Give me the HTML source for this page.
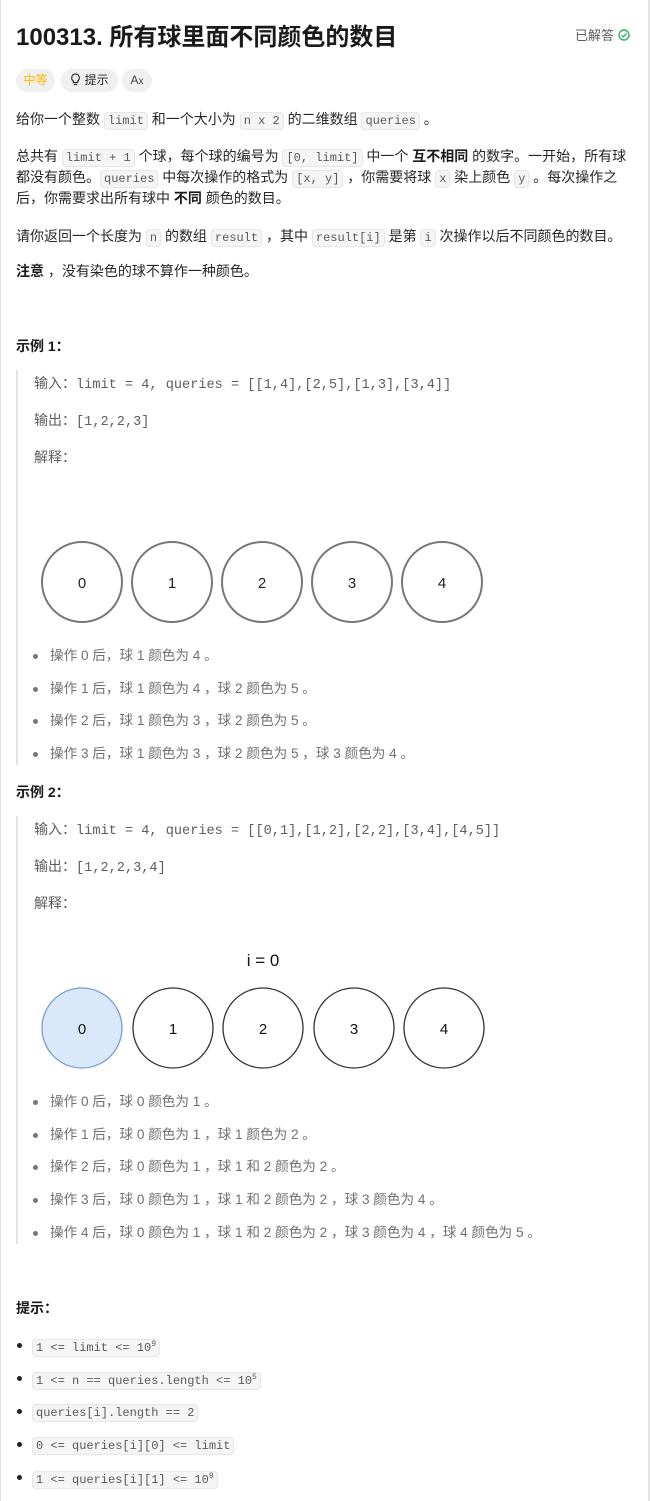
<!DOCTYPE html>
<html><head><meta charset="utf-8"><style>
*{margin:0;padding:0;box-sizing:border-box}
body{width:650px;height:1501px;background:#fff;position:relative;overflow:hidden;font-family:"Liberation Sans","Noto Sans CJK SC",sans-serif;font-size:14px;color:#262626}
.frame{position:absolute;left:0;top:0;width:650px;height:1501px;border-left:1px solid #e3e3e3;border-right:2px solid #e3e3e3}
.l{position:absolute;left:16px;line-height:20px;height:20px;white-space:nowrap}
code{font-family:"Liberation Mono",monospace;font-size:12px;background:#f5f5f6;border:1px solid #e6e6e6;border-radius:4px;padding:1px 3px;color:#5a5a5a}
b{font-weight:bold;color:#1a1a1a}
.q{left:34px;color:#5e5e5e}
.q span{font-family:"Liberation Mono",monospace;font-size:13.6px}
.bq{position:absolute;left:16px;width:2px;background:#e3e3e3}
.li{position:absolute;left:50px;line-height:20px;color:#707070;white-space:nowrap;font-size:13.6px}
.li:before{content:"";position:absolute;left:-17px;top:8px;width:5px;height:5px;border-radius:50%;background:#777}
.pl{position:absolute;left:32px;line-height:20px;white-space:nowrap}
.pl:before{content:"";position:absolute;left:-15px;top:8px;width:5px;height:5px;border-radius:50%;background:#222}
.tag{position:absolute;top:69px;height:23px;border-radius:12px;background:#f0f0f0;font-size:12px;line-height:23px;text-align:center}
sup{font-size:8px;vertical-align:5px}
</style></head><body>
<div class="frame"></div>
<div style="position:absolute;left:16px;top:22px;font-size:24px;font-weight:bold;color:#1a1a1a;line-height:32px">100313. 所有球里面不同颜色的数目</div>
<div style="position:absolute;left:575px;top:27px;font-size:13px;color:#5e5e5e;line-height:18px">已解答 <svg width="12" height="12" viewBox="0 0 12 12" style="vertical-align:-1px"><circle cx="6" cy="6" r="5" fill="none" stroke="#2db55d" stroke-width="1.4"/><path d="M3.6 6.1 L5.4 7.8 L8.4 4.5" fill="none" stroke="#2db55d" stroke-width="1.4"/></svg></div>
<div class="tag" style="left:16px;width:39px;color:#ffb800">中等</div>
<div class="tag" style="left:61px;width:57px;color:#262626"><svg width="11" height="13" viewBox="0 0 11 13" style="vertical-align:-2px"><path d="M5.5 1a3.8 3.8 0 0 0-2.2 6.9v1.6h4.4V7.9A3.8 3.8 0 0 0 5.5 1z M3.8 11.5h3.4" fill="none" stroke="#333" stroke-width="1.2"/></svg> 提示</div>
<div class="tag" style="left:122px;width:30px;color:#444">A<span style="font-size:10px">x</span></div>

<div class="l" style="top:109px">给你一个整数 <code>limit</code> 和一个大小为 <code>n x 2</code> 的二维数组 <code>queries</code> 。</div>
<div class="l" style="top:146px">总共有 <code>limit + 1</code> 个球，每个球的编号为 <code>[0, limit]</code> 中一个 <b>互不相同</b> 的数字。一开始，所有球</div>
<div class="l" style="top:167px">都没有颜色。<code>queries</code> 中每次操作的格式为 <code>[x, y]</code> ，你需要将球 <code>x</code> 染上颜色 <code>y</code> 。每次操作之</div>
<div class="l" style="top:188px">后，你需要求出所有球中 <b>不同</b> 颜色的数目。</div>
<div class="l" style="top:226px">请你返回一个长度为 <code>n</code> 的数组 <code>result</code> ，其中 <code>result[i]</code> 是第 <code>i</code> 次操作以后不同颜色的数目。</div>
<div class="l" style="top:261px"><b>注意</b> ，没有染色的球不算作一种颜色。</div>

<div class="l" style="top:336px"><b>示例 1：</b></div>
<div class="bq" style="top:370px;height:395px"></div>
<div class="l q" style="top:373px">输入：<span>limit = 4, queries = [[1,4],[2,5],[1,3],[3,4]]</span></div>
<div class="l q" style="top:410px">输出：<span>[1,2,2,3]</span></div>
<div class="l q" style="top:447px">解释：</div>
<svg style="position:absolute;left:0;top:530px" width="500" height="100">
<g fill="none" stroke="#777" stroke-width="2"><circle cx="82" cy="52" r="40"/><circle cx="172" cy="52" r="40"/><circle cx="262" cy="52" r="40"/><circle cx="352" cy="52" r="40"/><circle cx="442" cy="52" r="40"/></g>
<g font-family="Liberation Sans" font-size="15" fill="#222" text-anchor="middle"><text x="82" y="58">0</text><text x="172" y="58">1</text><text x="262" y="58">2</text><text x="352" y="58">3</text><text x="442" y="58">4</text></g></svg>
<div class="li" style="top:646px">操作 0 后，球 1 颜色为 4 。</div>
<div class="li" style="top:679px">操作 1 后，球 1 颜色为 4 ，球 2 颜色为 5 。</div>
<div class="li" style="top:711px">操作 2 后，球 1 颜色为 3 ，球 2 颜色为 5 。</div>
<div class="li" style="top:744px">操作 3 后，球 1 颜色为 3 ，球 2 颜色为 5 ，球 3 颜色为 4 。</div>

<div class="l" style="top:782px"><b>示例 2：</b></div>
<div class="bq" style="top:816px;height:428px"></div>
<div class="l q" style="top:819px">输入：<span>limit = 4, queries = [[0,1],[1,2],[2,2],[3,4],[4,5]]</span></div>
<div class="l q" style="top:856px">输出：<span>[1,2,2,3,4]</span></div>
<div class="l q" style="top:893px">解释：</div>
<svg style="position:absolute;left:0;top:940px" width="560" height="140">
<text x="263" y="26" font-family="Liberation Sans" font-size="17" fill="#111" text-anchor="middle">i = 0</text>
<circle cx="82" cy="88" r="40" fill="#dae8fc" stroke="#7a9cd3" stroke-width="1.3"/>
<g fill="none" stroke="#333" stroke-width="1.3"><circle cx="173" cy="88" r="40"/><circle cx="263" cy="88" r="40"/><circle cx="354" cy="88" r="40"/><circle cx="444" cy="88" r="40"/></g>
<g font-family="Liberation Sans" font-size="15" fill="#111" text-anchor="middle"><text x="82" y="94">0</text><text x="173" y="94">1</text><text x="263" y="94">2</text><text x="354" y="94">3</text><text x="444" y="94">4</text></g></svg>
<div class="li" style="top:1092px">操作 0 后，球 0 颜色为 1 。</div>
<div class="li" style="top:1125px">操作 1 后，球 0 颜色为 1 ，球 1 颜色为 2 。</div>
<div class="li" style="top:1157px">操作 2 后，球 0 颜色为 1 ，球 1 和 2 颜色为 2 。</div>
<div class="li" style="top:1190px">操作 3 后，球 0 颜色为 1 ，球 1 和 2 颜色为 2 ，球 3 颜色为 4 。</div>
<div class="li" style="top:1223px">操作 4 后，球 0 颜色为 1 ，球 1 和 2 颜色为 2 ，球 3 颜色为 4 ，球 4 颜色为 5 。</div>

<div class="l" style="top:1298px"><b>提示：</b></div>
<div class="pl" style="top:1335px"><code>1 &lt;= limit &lt;= 10<sup>9</sup></code></div>
<div class="pl" style="top:1368px"><code>1 &lt;= n == queries.length &lt;= 10<sup>5</sup></code></div>
<div class="pl" style="top:1401px"><code>queries[i].length == 2</code></div>
<div class="pl" style="top:1434px"><code>0 &lt;= queries[i][0] &lt;= limit</code></div>
<div class="pl" style="top:1467px"><code>1 &lt;= queries[i][1] &lt;= 10<sup>9</sup></code></div>
</body></html>
